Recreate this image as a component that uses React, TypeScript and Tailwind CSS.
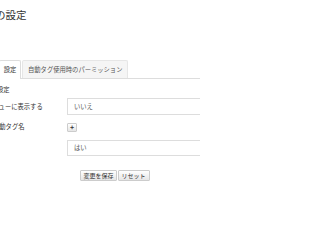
import React from 'react';

export default function App() {
  return (
    <div className="w-[200px] h-[200px] overflow-hidden bg-white text-[#333] font-['Noto_Sans_CJK_JP',sans-serif]">
      <h1 className="ml-[-5px] pt-[9px] text-[10.5px] leading-[12px] text-[#333] whitespace-nowrap">の設定</h1>

      <div className="mt-[39px] flex items-end h-[19px] border-b border-[#dddddd] text-[6.3px] leading-[8px] whitespace-nowrap">
        <div className="ml-[-1px] h-[19px] w-[22px] flex items-center justify-center bg-white border border-b-0 border-[#dddddd] rounded-t-[2px] mb-[-1px] text-[#333]">
          設定
        </div>
        <div className="ml-[1px] h-[18px] px-[5px] flex items-center bg-[#f5f5f5] border border-b-0 border-[#e6e6e6] rounded-t-[2px] text-[#555]">
          自動タグ使用時のパーミッション
        </div>
      </div>

      <div className="ml-[-3px] mt-[7px] text-[6.3px] leading-[8px] whitespace-nowrap">設定</div>

      <div className="mt-[4px] flex items-center h-[17px] text-[6.3px] leading-[8px] whitespace-nowrap">
        <div className="w-[67px] shrink-0 ml-[-14px] text-[#333]">メニューに表示する</div>
        <div className="ml-[14px] flex-1 h-[17px] border border-[#dddddd] flex items-center pl-[6px] text-[#555] min-w-[140px]">
          いいえ
        </div>
      </div>

      <div className="mt-[7px] flex items-center h-[10px] text-[6.3px] leading-[8px] whitespace-nowrap">
        <div className="w-[67px] shrink-0 ml-[-7px] text-[#333]">自動タグ名</div>
        <button className="ml-[7px] w-[10px] h-[9px] flex items-center justify-center border border-[#cccccc] rounded-[1px] bg-gradient-to-b from-[#ffffff] to-[#e6e6e6] text-[#333] text-[7px] leading-none font-bold">
          +
        </button>
      </div>

      <div className="mt-[8px] flex items-center h-[16px] text-[6.3px] leading-[8px] whitespace-nowrap">
        <div className="w-[67px] shrink-0" />
        <div className="flex-1 h-[16px] border border-[#dddddd] flex items-center pl-[6px] text-[#555] min-w-[140px]">
          はい
        </div>
      </div>

      <div className="mt-[14px] flex justify-center gap-[1px] ml-[30px] text-[6px] leading-[8px] whitespace-nowrap">
        <button className="h-[11px] px-[2px] flex items-center border border-[#cccccc] rounded-[1px] bg-gradient-to-b from-[#ffffff] to-[#e6e6e6] text-[#333]">
          変更を保存
        </button>
        <button className="h-[11px] px-[3px] flex items-center border border-[#cccccc] rounded-[1px] bg-gradient-to-b from-[#ffffff] to-[#e6e6e6] text-[#333]">
          リセット
        </button>
      </div>
    </div>
  );
}
